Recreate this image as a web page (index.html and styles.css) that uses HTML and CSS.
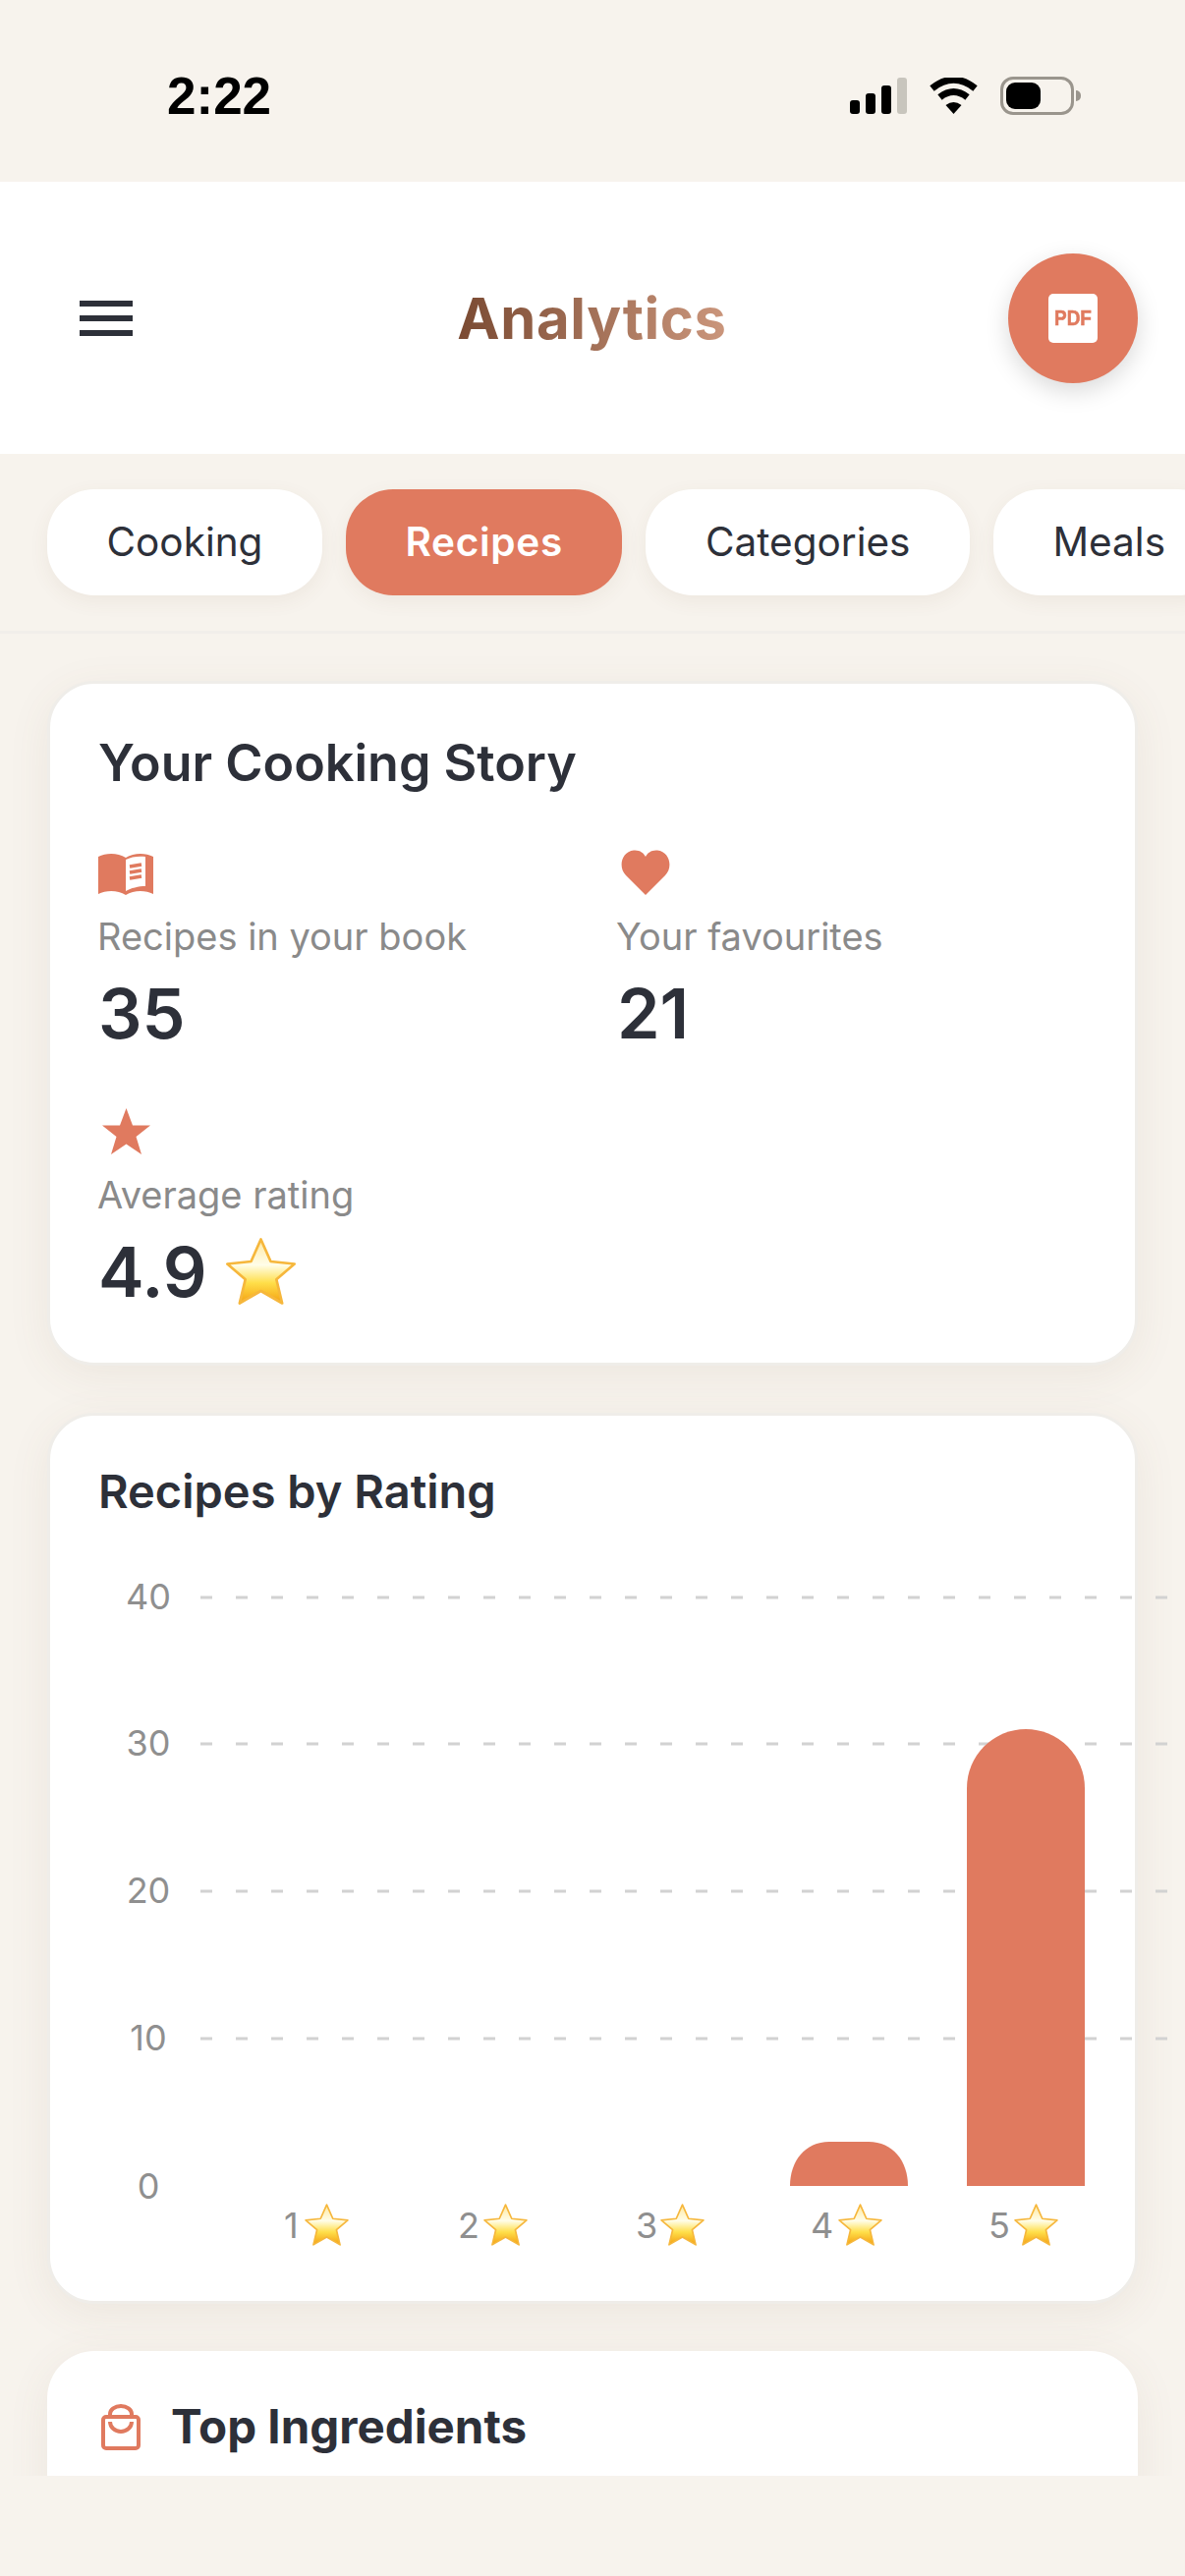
FILE: index.html
```html
<!DOCTYPE html>
<html lang="en">
<head>
    <meta charset="UTF-8">
    <meta name="viewport" content="width=device-width, initial-scale=1.0">
    <title>Analytics</title>
    <link rel="stylesheet" href="styles.css">
</head>
<body>

    <div class="status-bar">
        <span class="time">2:22</span>
        <div class="status-icons">
            <svg class="signal" width="58" height="37" viewBox="0 0 58 37">
                <rect x="0" y="23" width="10" height="14" rx="3" fill="#000"/>
                <rect x="16" y="16" width="10" height="21" rx="3" fill="#000"/>
                <rect x="32" y="8" width="10" height="29" rx="3" fill="#000"/>
                <rect x="48" y="0" width="10" height="37" rx="3" fill="#c8c5bd"/>
            </svg>
            <svg class="wifi" width="51" height="37" viewBox="0 0 51 37">
                <path d="M3.5 11 Q25.5 -6.5 47.5 11" fill="none" stroke="#000" stroke-width="7"/>
                <path d="M11.5 20 Q25.5 9 39.5 20" fill="none" stroke="#000" stroke-width="7"/>
                <path d="M17.5 28 Q25.5 22 33.5 28 L25.5 37 Z" fill="#000"/>
            </svg>
            <div class="battery"><div class="battery-level"></div></div>
        </div>
    </div>

    <header>
        <button class="menu-btn" aria-label="Menu"><span></span><span></span><span></span></button>
        <h1>Analytics</h1>
        <button class="pdf-btn" aria-label="Export PDF"><span class="pdf-icon"><span>PDF</span></span></button>
    </header>

    <nav class="tabs">
        <a class="tab">Cooking</a>
        <a class="tab active">Recipes</a>
        <a class="tab">Categories</a>
        <a class="tab">Meals</a>
    </nav>

    <main>
        <section class="card story">
            <h2>Your Cooking Story</h2>
            <div class="stats">
                <div class="stat">
                    <svg class="stat-icon book" width="56" height="46" viewBox="0 0 56 46">
                        <path d="M0 7 C8 3 20 3 28 8 C36 3 48 3 56 7 V45 C48 41 36 41 28 46 C20 41 8 41 0 45 Z" fill="#e07a5f"/>
                        <path d="M28 10 C33 7 42 6 48 7 V37 C41 37 33 39 28 42 Z" fill="#fff"/>
                        <path d="M32 17 L44 15 M32 23 L44 21 M32 29 L44 27" stroke="#e07a5f" stroke-width="3.5"/>
                    </svg>
                    <div class="label">Recipes in your book</div>
                    <div class="value">35</div>
                </div>
                <div class="stat">
                    <svg class="stat-icon heart" width="50" height="46" viewBox="0 0 50 46">
                        <path d="M25 46 L5 26 C-3 18 0 2 13 0.5 C19 0 23 3 25 7 C27 3 31 0 37 0.5 C50 2 53 18 45 26 Z" fill="#e07a5f"/>
                    </svg>
                    <div class="label">Your favourites</div>
                    <div class="value">21</div>
                </div>
                <div class="stat">
                    <svg class="stat-icon star" width="49" height="47" viewBox="0 0 49 47">
                        <path d="M24.5 0 L31 17.5 L49 17.5 L34.5 29 L40 47 L24.5 36.5 L9 47 L14.5 29 L0 17.5 L18 17.5 Z" fill="#e07a5f"/>
                    </svg>
                    <div class="label">Average rating</div>
                    <div class="value">4.9
                        <svg class="emoji-star" width="75" height="72" viewBox="0 0 45 43"><use href="#emoji-star"/></svg>
                    </div>
                </div>
            </div>
        </section>

        <section class="card rating">
            <h3>Recipes by Rating</h3>
            <svg class="chart" width="1104" height="690" viewBox="0 0 1104 690">
                <defs>
                    <linearGradient id="star-fill" x1="0" y1="0" x2="0" y2="1">
                        <stop offset="0" stop-color="#ffe9a0"/>
                        <stop offset="0.4" stop-color="#fffde8"/>
                        <stop offset="0.68" stop-color="#ffdf4a"/>
                        <stop offset="1" stop-color="#f4a010"/>
                    </linearGradient>
                    <symbol id="emoji-star" viewBox="0 0 45 43">
                        <path d="M22.5 2 L28.5 15.5 L43 17 L32 26.5 L35.5 41 L22.5 33.5 L9.5 41 L13 26.5 L2 17 L16.5 15.5 Z" fill="url(#star-fill)" stroke="#f6b73c" stroke-width="1.6" stroke-linejoin="round"/>
                    </symbol>
                </defs>
                <g class="grid">
                    <line x1="153" y1="26" x2="1140" y2="26"/>
                    <line x1="153" y1="175" x2="1140" y2="175"/>
                    <line x1="153" y1="325" x2="1140" y2="325"/>
                    <line x1="153" y1="475" x2="1140" y2="475"/>
                </g>
                <g class="y-labels">
                    <text x="100" y="38">40</text>
                    <text x="100" y="187">30</text>
                    <text x="100" y="337">20</text>
                    <text x="100" y="487">10</text>
                    <text x="100" y="638">0</text>
                </g>
                <path class="bar" d="M753 625 C753 600 768 580 793 580 H833 C858 580 873 600 873 625 Z"/>
                <path class="bar" d="M933 625 V220 A60 60 0 0 1 1053 220 V625 Z"/>
                <g class="x-labels">
                    <text x="238" y="678">1</text>
                    <text x="415" y="678">2</text>
                    <text x="596" y="678">3</text>
                    <text x="774" y="678">4</text>
                    <text x="955" y="678">5</text>
                </g>
                <use href="#emoji-star" x="258" y="642" width="47" height="45"/>
                <use href="#emoji-star" x="440" y="642" width="47" height="45"/>
                <use href="#emoji-star" x="620" y="642" width="47" height="45"/>
                <use href="#emoji-star" x="801" y="642" width="47" height="45"/>
                <use href="#emoji-star" x="980" y="642" width="47" height="45"/>
            </svg>
        </section>

        <section class="card ingredients">
            <div class="card-head">
                <svg width="40" height="47" viewBox="0 0 40 47">
                    <rect x="2" y="13" width="36" height="32" rx="3" fill="none" stroke="#e07a5f" stroke-width="4"/>
                    <path d="M9 11 V10 A11 8 0 0 1 31 10 V11" fill="none" stroke="#e07a5f" stroke-width="4"/>
                    <path d="M9 18 A11 10 0 0 0 31 18" fill="none" stroke="#e07a5f" stroke-width="4"/>
                </svg>
                <h3>Top Ingredients</h3>
            </div>
            <p class="sub">Used most in your recipes</p>
        </section>
    </main>

</body>
</html>
```

FILE: styles.css
```css
* {
    box-sizing: border-box;
}

body {
    font-family: Inter, "Liberation Sans", sans-serif;
    margin: 0;
    width: 1206px;
    height: 2622px;
    overflow: hidden;
    background-color: #f7f3ed;
    color: #2d3039;
}

/* Status bar */
.status-bar {
    height: 185px;
    padding: 69px 113px 0 170px;
    display: flex;
    justify-content: space-between;
    align-items: flex-start;
}

.time {
    font-family: "Liberation Sans", sans-serif;
    font-weight: 700;
    font-size: 53px;
    line-height: 58px;
    color: #000;
}

.status-icons {
    display: flex;
    align-items: center;
    gap: 22px;
    margin-top: 9px;
}

.battery {
    position: relative;
    width: 75px;
    height: 39px;
    border: 3px solid #9a958d;
    border-radius: 13px;
    padding: 3px;
}

.battery::after {
    content: "";
    position: absolute;
    right: -10px;
    top: 11px;
    width: 5px;
    height: 11px;
    background-color: #9a958d;
    border-radius: 0 6px 6px 0;
}

.battery-level {
    width: 35px;
    height: 27px;
    background-color: #000;
    border-radius: 9px;
}

/* Header */
header {
    height: 277px;
    background-color: #fff;
    padding: 0 48px 0 81px;
    display: flex;
    align-items: center;
    justify-content: space-between;
    position: relative;
}

header h1 {
    margin: 0 0 0 44px;
    font-size: 58px;
    font-weight: 700;
    letter-spacing: 0.6px;
    background: linear-gradient(90deg, #7a4a32, #cb967c);
    -webkit-background-clip: text;
    background-clip: text;
    color: transparent;
}

.menu-btn {
    width: 54px;
    height: 36px;
    padding: 0;
    background: none;
    border: none;
    display: flex;
    flex-direction: column;
    justify-content: space-between;
}

.menu-btn span {
    display: block;
    height: 6px;
    background-color: #2d3039;
}

.pdf-btn {
    width: 132px;
    height: 132px;
    padding: 0;
    border: none;
    border-radius: 50%;
    background-color: #e07a5f;
    box-shadow: 0 8px 24px rgba(0, 0, 0, 0.15);
    display: flex;
    align-items: center;
    justify-content: center;
}

.pdf-icon {
    width: 50px;
    height: 50px;
    background-color: #fff;
    border-radius: 5px;
    color: #e07a5f;
    font-family: "Liberation Sans", sans-serif;
    font-size: 22px;
    font-weight: 700;
    line-height: 50px;
    text-align: center;
    -webkit-text-stroke: 0.6px #e07a5f;
}

.pdf-icon span {
    display: block;
    transform: scaleX(0.86);
}

/* Tabs */
.tabs {
    height: 183px;
    padding: 36px 0 0 48px;
    display: flex;
    gap: 24px;
    overflow: hidden;
    border-bottom: 3px solid #f1eeea;
}

.tab {
    flex: none;
    height: 108px;
    padding: 0 60.5px;
    border-radius: 48px;
    background-color: #fff;
    font-size: 40.5px;
    line-height: 108px;
    color: #2d3039;
    box-shadow: 0 6px 20px rgba(120, 90, 60, 0.07);
}

.tab.active {
    background-color: #e07a5f;
    color: #fff;
    font-weight: 600;
    letter-spacing: 0.7px;
}

/* Cards */
main {
    height: 1875px;
    padding: 48px 48px 0;
    overflow: hidden;
}

.card {
    background-color: #fff;
    border: 3px solid #efede9;
    border-radius: 48px;
    margin-bottom: 48px;
    box-shadow: 0 10px 44px rgba(120, 90, 60, 0.08);
}

.story {
    padding: 50px 49px 50px;
}

h2 {
    margin: 0;
    font-size: 52px;
    font-weight: 600;
    line-height: 62px;
}

.stats {
    margin-top: 58px;
    display: grid;
    grid-template-columns: 1fr 1fr;
    column-gap: 50px;
    row-gap: 58px;
}

.stat-icon {
    display: block;
    margin-bottom: 18px;
}

.stat-icon.book {
    margin-top: -1px;
    margin-bottom: 19px;
}

.stat-icon.star {
    margin: -4px 0 18px 4px;
}

.stat-icon.heart {
    margin: -1px 0 19px 4px;
}

.label {
    margin-left: -1px;
    font-size: 38px;
    line-height: 46px;
    color: #8a8a8a;
}

.value {
    margin-top: 14px;
    font-size: 70px;
    font-weight: 600;
    line-height: 84px;
}

.emoji-star {
    vertical-align: -10px;
}

.rating {
    padding: 49px 0 52px;
    overflow: visible;
}

h3 {
    margin: 0;
    font-size: 47px;
    font-weight: 600;
    line-height: 56px;
}

.rating h3 {
    padding-left: 49px;
}

.chart {
    display: block;
    margin-top: 54px;
    overflow: visible;
}

.grid line {
    stroke: #d2d2d2;
    stroke-width: 3;
    stroke-dasharray: 12 24;
}

.y-labels text {
    font-size: 36px;
    fill: #8f8f8f;
    text-anchor: middle;
}

.x-labels text {
    font-size: 36px;
    fill: #8f8f8f;
}

.bar {
    fill: #e07a5f;
}

.ingredients {
    border: none;
    padding: 49px 55px;
}

.card-head {
    display: flex;
    align-items: center;
    gap: 31px;
}

.card-head h3 {
    font-size: 47.5px;
    font-weight: 700;
}

.sub {
    margin: 19px 0 0 73px;
    font-size: 36px;
    color: #8a8a8a;
}
```
